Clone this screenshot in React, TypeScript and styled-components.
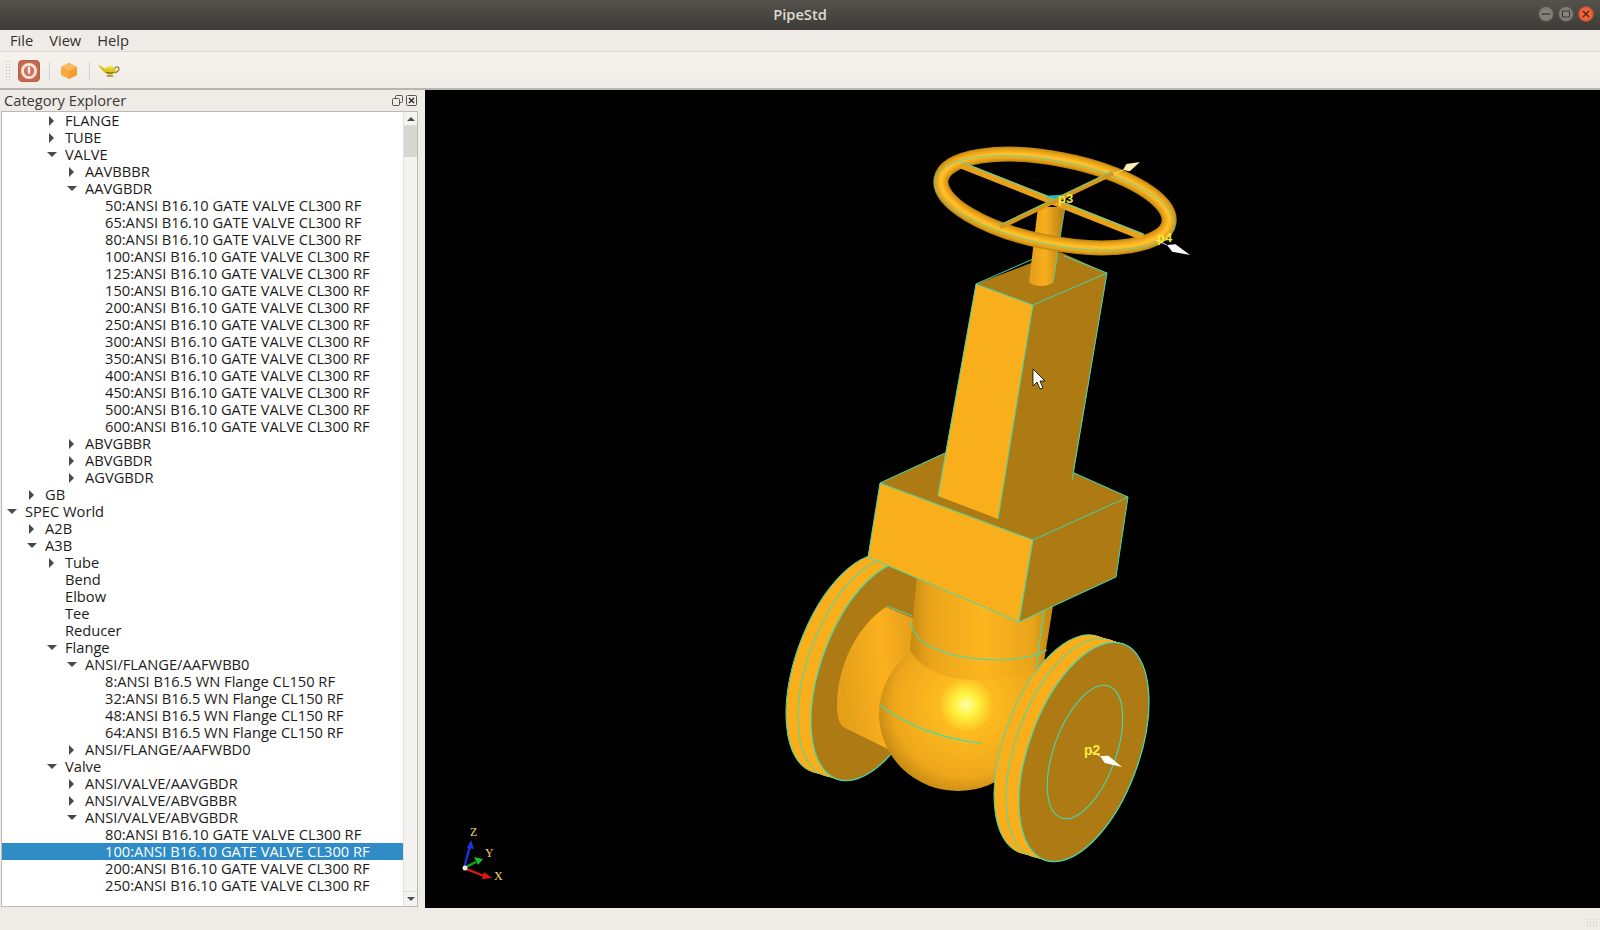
import React from "react";
import styled, { createGlobalStyle } from "styled-components";

const Global = createGlobalStyle`
  *, *::before, *::after { box-sizing: border-box; }
  html, body { margin: 0; padding: 0; background: #efebe7; overflow: hidden; }
  #root { height: 930px; }
`;

const Window = styled.div`
  width: 1600px; height: 930px; display: flex; flex-direction: column;
  font-family: "Open Sans", "Noto Sans", sans-serif; font-size: 14.67px; color: #2a2a28; background: #efebe7;
`;
const TitleBar = styled.div`
  height: 30px; flex: none; background: linear-gradient(#55524c, #3c3b37); color: #dfdbd2;
  display: flex; align-items: center; justify-content: center; position: relative; font-size: 14.67px; font-weight: 600; padding-bottom: 3px;
`;
const WinButtons = styled.div`
  position: absolute; right: 6px; top: 6px; display: flex; gap: 4px;
`;
const WinBtn = styled.div<{ $close?: boolean }>`
  width: 16px; height: 16px; border-radius: 50%; display: flex; align-items: center; justify-content: center;
  background: ${(p) => (p.$close ? "radial-gradient(#f0704a, #e2562c)" : "radial-gradient(#8a8881, #77756f)")};
  border: 1px solid ${(p) => (p.$close ? "#a9492a" : "#55534e")};
`;
const MenuBar = styled.div`
  height: 22px; flex: none; display: flex; align-items: center; padding: 0 0 2px 4px; background: #efebe7; border-bottom: 1px solid #dcd8d3;
`;
const MenuItem = styled.div`
  padding: 0 6px; margin-right: 4px; color: #33322f;
`;
const ToolBar = styled.div`
  height: 38px; flex: none; display: flex; align-items: center; padding: 1px 0 0 5px; gap: 8px;
  background: linear-gradient(#f6f3ef, #efebe7); border-bottom: 2px solid #b9b6b1;
`;
const Grip = styled.div`
  width: 5px; height: 22px;
  background-image: radial-gradient(#c4c1bc 1px, transparent 1px); background-size: 3px 3px;
`;
const ToolSep = styled.div`
  width: 1px; height: 18px; background: #d5d1cc; margin-left: 1px;
`;
const ToolIcon = styled.svg`
  flex: none; display: block;
`;
const Main = styled.div`
  flex: 1; min-height: 0; display: flex;
`;
const Dock = styled.div`
  width: 425px; flex: none; display: flex; flex-direction: column;
`;
const DockTitle = styled.div`
  height: 21px; flex: none; display: flex; align-items: center; padding: 0 8px 2px 4px; justify-content: space-between; color: #3a3936;
`;
const DockButtons = styled.div`
  display: flex; gap: 3px; margin-top: 2px;
`;
const TreeFrame = styled.div`
  flex: 1; min-height: 0; margin: 0 7px 1px 1px; display: flex; border: 1px solid #bdb9b4; background: #fff; overflow: hidden;
`;
const TreeList = styled.div`
  flex: 1; min-width: 0; overflow: hidden; color: #1c1c1a;
`;
const Row = styled.div<{ $depth: number; $selected?: boolean }>`
  height: 17px; line-height: 17px; white-space: nowrap; position: relative;
  padding-left: ${(p) => 23 + p.$depth * 20}px;
  background: ${(p) => (p.$selected ? "#308cc6" : "transparent")};
  color: ${(p) => (p.$selected ? "#fff" : "inherit")};
`;
const Arrow = styled.span<{ $open?: boolean; $depth: number }>`
  position: absolute; top: 4px; left: ${(p) => 5 + p.$depth * 20 + (p.$open ? 0 : 2)}px; width: 0; height: 0;
  ${(p) =>
    p.$open
      ? "border-left: 5px solid transparent; border-right: 5px solid transparent; border-top: 5px solid #4a4a48; margin-top: 2px;"
      : "border-top: 5px solid transparent; border-bottom: 5px solid transparent; border-left: 5px solid #4a4a48;"}
`;
const ScrollBar = styled.div`
  width: 14px; flex: none; display: flex; flex-direction: column; background: #f5f3f1; border-left: 1px solid #e4e1dd;
`;
const ScrollBtn = styled.div`
  height: 14px; flex: none; display: flex; align-items: center; justify-content: center; border-bottom: 1px solid #dedbd7;
`;
const ScrollBtnBottom = styled(ScrollBtn)`
  border-bottom: 0; border-top: 1px solid #dedbd7; height: 15px;
`;
const ScrollTrack = styled.div`
  flex: 1; min-height: 0;
`;
const ScrollThumb = styled.div`
  height: 31px; flex: none; background: #d9d7d3;
`;
const Tri = styled.span<{ $up?: boolean }>`
  width: 0; height: 0; border-left: 4px solid transparent; border-right: 4px solid transparent;
  ${(p) => (p.$up ? "border-bottom: 4px solid #4e4d4a;" : "border-top: 4px solid #4e4d4a;")}
`;
const Viewport = styled.div`
  flex: 1; min-width: 0; background: #000;
`;
const ViewSvg = styled.svg`
  display: block; width: 100%; height: 100%;
`;
const StatusBar = styled.div`
  height: 22px; flex: none; background: #efebe7; display: flex; justify-content: flex-end; align-items: flex-end; padding: 0 2px 2px 0;
`;
const SizeGrip = styled.div`
  width: 12px; height: 10px;
  background-image: radial-gradient(#c8c5c0 1px, transparent 1px); background-size: 3px 3px;
`;

type Node = [number, string, ("o" | "c")?, boolean?];
const gate = (s: number[]) => s.map((v) => `${v}:ANSI B16.10 GATE VALVE CL300 RF`);

const rows: Node[] = [
  [2, "FLANGE", "c"], [2, "TUBE", "c"], [2, "VALVE", "o"], [3, "AAVBBBR", "c"], [3, "AAVGBDR", "o"],
  ...gate([50, 65, 80, 100, 125, 150, 200, 250, 300, 350, 400, 450, 500, 600]).map((s) => [4, s] as Node),
  [3, "ABVGBBR", "c"], [3, "ABVGBDR", "c"], [3, "AGVGBDR", "c"], [1, "GB", "c"], [0, "SPEC World", "o"],
  [1, "A2B", "c"], [1, "A3B", "o"], [2, "Tube", "c"], [2, "Bend"], [2, "Elbow"], [2, "Tee"], [2, "Reducer"],
  [2, "Flange", "o"], [3, "ANSI/FLANGE/AAFWBB0", "o"],
  [4, "8:ANSI B16.5 WN Flange CL150 RF"], [4, "32:ANSI B16.5 WN Flange CL150 RF"],
  [4, "48:ANSI B16.5 WN Flange CL150 RF"], [4, "64:ANSI B16.5 WN Flange CL150 RF"],
  [3, "ANSI/FLANGE/AAFWBD0", "c"], [2, "Valve", "o"], [3, "ANSI/VALVE/AAVGBDR", "c"],
  [3, "ANSI/VALVE/ABVGBBR", "c"], [3, "ANSI/VALVE/ABVGBDR", "o"],
  [4, gate([80])[0]], [4, gate([100])[0], undefined, true], [4, gate([200])[0]], [4, gate([250])[0]],
];

const EDGE = "#3fdcb4";
const LIGHT = "#f9ae1c";
const DARK = "#ad7a13";
const RING = [
  [15, "#c08710"], [13, "#d29516"], [11, "#e09e18"], [9, "#eba51a"], [7, "#f3ab1c"], [5, "#f9b21f"], [3, "#febf2c"],
] as const;

function Flange({ cx, cy, face }: { cx: number; cy: number; face: string }) {
  const ell = { rx: 55, ry: 115 };
  const at = (t: number) => ({ x: cx - 25 * t, y: cy - 7.5 * t });
  const steps = Array.from({ length: 26 }, (_, i) => 1 - i / 25);
  return (
    <g>
      {steps.map((t, i) => {
        const p = at(t);
        const outlined = i === 0 || i === 12;
        return (
          <ellipse key={i} cx={p.x} cy={p.y} {...ell} transform={`rotate(20 ${p.x} ${p.y})`} fill={LIGHT}
            stroke={outlined ? EDGE : "none"} strokeWidth={1} />
        );
      })}
      <ellipse cx={cx} cy={cy} {...ell} transform={`rotate(20 ${cx} ${cy})`} fill={face} stroke={EDGE} strokeWidth={1.2} />
    </g>
  );
}

function Valve() {
  const wheel = { cx: 1055, cy: 201 };
  const rot = `rotate(11 ${wheel.cx} ${wheel.cy})`;
  return (
    <g>
      <defs>
        <linearGradient id="neck" x1="0" y1="0" x2="1" y2="0">
          <stop offset="0" stopColor="#c48a14" />
          <stop offset="0.14" stopColor="#eaa41a" />
          <stop offset="0.5" stopColor="#fdb61f" />
          <stop offset="0.85" stopColor="#e9a41a" />
          <stop offset="1" stopColor="#b9820f" />
        </linearGradient>
        <linearGradient id="shaft" x1="0" y1="0" x2="1" y2="0">
          <stop offset="0" stopColor="#e29c18" />
          <stop offset="0.45" stopColor="#f9b01e" />
          <stop offset="1" stopColor="#b07c12" />
        </linearGradient>
        <linearGradient id="stub" x1="1" y1="0" x2="0" y2="0.15">
          <stop offset="0" stopColor="#d8951a" />
          <stop offset="0.55" stopColor="#fbb01e" />
          <stop offset="1" stopColor="#e5a01a" />
        </linearGradient>
        <linearGradient id="stubR" x1="0" y1="0" x2="0" y2="1">
          <stop offset="0" stopColor="#f5ab1d" />
          <stop offset="0.7" stopColor="#e39d18" />
          <stop offset="1" stopColor="#b5800f" />
        </linearGradient>
        <radialGradient id="ball" gradientUnits="userSpaceOnUse" cx="966" cy="705" r="100">
          <stop offset="0" stopColor="#ffffa8" />
          <stop offset="0.12" stopColor="#fff23c" />
          <stop offset="0.27" stopColor="#fdbb20" />
          <stop offset="0.72" stopColor="#efa71b" />
          <stop offset="1" stopColor="#b07c12" />
        </radialGradient>
      </defs>

      <Flange cx={876} cy={671} face={DARK} />
      <path d="M886 607 C858 625 837 665 837 705 C837 716 839 723 843 727 L890 750 L930 700 L917 620 Z" fill="url(#stub)" />
      <path d="M887 606 L912 616" stroke={EDGE} strokeWidth="1" fill="none" />

      <path d="M1000 655 L1050 660 L1060 810 L1000 805 Z" fill="url(#stubR)" />
      <ellipse cx="958" cy="714" rx="79" ry="77" fill="url(#ball)" />
      <path d="M917 575 L1054 600 L1043 668 C1030 674 1000 680 975 680 C945 680 920 668 910 650 Z" fill="url(#neck)" />
      <path d="M911 622 C914 650 960 660 1000 660 C1020 659 1038 656 1047 650" stroke={EDGE} strokeWidth="1.1" fill="none" />
      <path d="M880 705 C905 725 945 740 981 743" stroke={EDGE} strokeWidth="1.1" fill="none" />
      <path d="M1044 610 L1036 668" stroke={EDGE} strokeWidth="1.1" fill="none" />

      <Flange cx={1084} cy={752} face={DARK} />
      <ellipse cx="1085" cy="752" rx="31" ry="70" transform="rotate(20 1085 752)" fill="none" stroke={EDGE} strokeWidth="1.1" />

      <polygon points="880,483 945,453 1072,472 1128,497 1033,540" fill={DARK} />
      <polygon points="880,483 1033,540 1019,622 868,557" fill={LIGHT} stroke={EDGE} strokeWidth="1" />
      <polygon points="1033,540 1128,497 1116,577 1019,622" fill={DARK} stroke={EDGE} strokeWidth="1" />
      <path d="M945 453 L880 483 M1128 497 L1072 472" stroke={EDGE} strokeWidth="1" fill="none" />

      <polygon points="976,284 1033,305 998,519 938,496" fill={LIGHT} />
      <polygon points="1033,305 1107,273 1072,483 998,519" fill={DARK} />
      <polygon points="976,284 1060,252 1107,273 1033,305" fill={DARK} />
      <path d="M938 496 L976 284 L1033 305 L998 519 M1033 305 L1107 273 L1072 480 M976 284 L1040 256 M1064 256 L1107 273" stroke={EDGE} strokeWidth="1" fill="none" />

      <path d="M1038 207 L1065 207 L1053 283 C1045 287 1034 287 1029 282 Z" fill="url(#shaft)" />
      <path d="M1065 207 L1053 283" stroke={EDGE} strokeWidth="0.8" fill="none" />

      {RING.map(([w, c]) => (
        <ellipse key={w} {...wheel} rx="116" ry="42" transform={rot} fill="none" stroke={c} strokeWidth={w} />
      ))}
      <ellipse cx={1055} cy={203} rx="122" ry="42" transform={rot} fill="none" stroke={EDGE} strokeWidth="0.7" />

      <path d="M961 165 L1143 237" stroke="#e9a01a" strokeWidth="7" />
      <path d="M961 162 L1143 234" stroke={EDGE} strokeWidth="1" />
      <path d="M1113 173 L1000 227" stroke="#d8951a" strokeWidth="5" />
      <path d="M1113 171 L1000 225" stroke={EDGE} strokeWidth="0.8" />
      <path d="M1047 197 L1062 196" stroke="#20c8c8" strokeWidth="2.5" />

      <WhiteArrow x1={1167} y1={245} x2={1190} y2={255} />
      <WhiteArrow x1={1123} y1={170} x2={1140} y2={162} fill="#ffefb8" />
      <WhiteArrow x1={1100} y1={756} x2={1122} y2={767} />
      <Label x={1058} y={203} size={13}>p3</Label>
      <Label x={1157} y={242} size={13}>p4</Label>
      <Label x={1084} y={755} size={14}>p2</Label>
    </g>
  );
}

function WhiteArrow({ x1, y1, x2, y2, fill = "#fff" }: { x1: number; y1: number; x2: number; y2: number; fill?: string }) {
  const dx = x2 - x1, dy = y2 - y1;
  const len = Math.hypot(dx, dy);
  const nx = -dy / len, ny = dx / len;
  const bx = x1 + dx * 0.3, by = y1 + dy * 0.3;
  return (
    <g>
      <polygon points={`${x1},${y1} ${bx + nx * 4},${by + ny * 4} ${x2},${y2} ${bx - nx * 4},${by - ny * 4}`} fill={fill} />
      <line x1={x1 - dx * 0.5} y1={y1 - dy * 0.5} x2={x1} y2={y1} stroke={fill} strokeWidth="0.8" />
    </g>
  );
}

function Label({ x, y, size, children }: { x: number; y: number; size: number; children: React.ReactNode }) {
  return <text x={x} y={y} fontFamily='"Liberation Sans", sans-serif' fontWeight="700" fontSize={size} fill="#f7e93c">{children}</text>;
}

function Triad() {
  const t = { fontFamily: '"Liberation Serif", serif', fontSize: 12, fill: "#eedc60" };
  return (
    <g>
      <path d="M464 868 L470 846" stroke="#1c34e0" strokeWidth="2.4" />
      <polygon points="467,848 474,849 471,840" fill="#1c34e0" />
      <path d="M464 868 L476 862" stroke="#0eaa20" strokeWidth="2.4" />
      <polygon points="474,857 478,865 483,859" fill="#18c030" />
      <path d="M464 868 L484 876" stroke="#e01818" strokeWidth="2.4" />
      <polygon points="484,872 482,879 492,878" fill="#e01818" />
      <circle cx="465" cy="868" r="2.5" fill="#f0e8e0" />
      <text x="470" y="836" {...t}>Z</text>
      <text x="485" y="857" {...t}>Y</text>
      <text x="494" y="880" {...t}>X</text>
    </g>
  );
}

export default function App() {
  return (
    <Window>
      <Global />
      <TitleBar>
        PipeStd
        <WinButtons>
          <WinBtn><svg width="8" height="8"><path d="M0 4h8" stroke="#3c3b37" strokeWidth="1.4" /></svg></WinBtn>
          <WinBtn><svg width="8" height="8"><rect x=".5" y="1" width="7" height="6" fill="none" stroke="#3c3b37" /></svg></WinBtn>
          <WinBtn $close><svg width="8" height="8"><path d="M1 1l6 6M7 1l-6 6" stroke="#5c2410" strokeWidth="1.5" /></svg></WinBtn>
        </WinButtons>
      </TitleBar>
      <MenuBar>
        <MenuItem>File</MenuItem>
        <MenuItem>View</MenuItem>
        <MenuItem>Help</MenuItem>
      </MenuBar>
      <ToolBar>
        <Grip />
        <ToolIcon width="22" height="22" viewBox="0 0 22 22">
          <rect x="0.5" y="0.5" width="21" height="21" rx="3.5" fill="#c8694f" stroke="#b0604a" />
          <circle cx="11" cy="11" r="8" fill="#f6e6dc" />
          <circle cx="11" cy="11" r="5.2" fill="#d0745a" />
          <rect x="9.8" y="6.5" width="2.4" height="7.5" rx="1" fill="#f8ece4" />
        </ToolIcon>
        <ToolSep />
        <ToolIcon width="22" height="18" viewBox="-2 0 22 18">
          <polygon points="9,1 17,5 17,13 9,17 1,13 1,5" fill="#f9a83e" />
          <polygon points="9,1 17,5 9,9 1,5" fill="#fbb75a" />
          <polygon points="9,9 17,5 17,13 9,17" fill="#f29e30" />
        </ToolIcon>
        <ToolSep />
        <ToolIcon width="22" height="14" viewBox="0 0 23 14">
          <path d="M0 1 C3 1 5 3 7 5 L8 9 C5 8 3 4 0 1 Z" fill="#d9c018" />
          <path d="M17 5 C19 1 24 3 21 7 C20 8 19 9 17 9" fill="none" stroke="#8d8420" strokeWidth="1.3" />
          <ellipse cx="12.5" cy="6.5" rx="6" ry="4" fill="#e3c91c" />
          <path d="M7 7 C9 11 16 11 18 7 C16 9 10 9 7 7 Z" fill="#6f6a20" />
          <ellipse cx="12.5" cy="3" rx="3" ry="1.6" fill="#f0e050" />
          <path d="M10 11 h5 l1.5 2 h-8 Z" fill="#a89a1c" />
        </ToolIcon>
      </ToolBar>
      <Main>
        <Dock>
          <DockTitle>
            Category Explorer
            <DockButtons>
              <svg width="11" height="11" viewBox="0 0 11 11"><rect x="3.5" y="0.5" width="7" height="7" rx="1" fill="none" stroke="#555" /><rect x="0.5" y="3.5" width="7" height="7" rx="1" fill="#efebe7" stroke="#555" /></svg>
              <svg width="11" height="11" viewBox="0 0 11 11"><rect x="0.5" y="0.5" width="10" height="10" rx="1" fill="none" stroke="#555" /><path d="M3 3l5 5M8 3l-5 5" stroke="#333" strokeWidth="1.5" /></svg>
            </DockButtons>
          </DockTitle>
          <TreeFrame>
            <TreeList>
              {rows.map(([d, text, state, sel], i) => (
                <Row key={i} $depth={d} $selected={sel}>
                  {state && <Arrow $depth={d} $open={state === "o"} />}
                  {text}
                </Row>
              ))}
            </TreeList>
            <ScrollBar>
              <ScrollBtn><Tri $up /></ScrollBtn>
              <ScrollThumb />
              <ScrollTrack />
              <ScrollBtnBottom><Tri /></ScrollBtnBottom>
            </ScrollBar>
          </TreeFrame>
        </Dock>
        <Viewport>
          <ViewSvg viewBox="425 90 1175 818">
            <Valve />
            <Triad />
            <path d="M1033 369 L1033 386 L1037 382 L1040 389 L1043 388 L1040 381 L1045 381 Z" fill="#fff" stroke="#000" strokeWidth="0.8" />
          </ViewSvg>
        </Viewport>
      </Main>
      <StatusBar><SizeGrip /></StatusBar>
    </Window>
  );
}
